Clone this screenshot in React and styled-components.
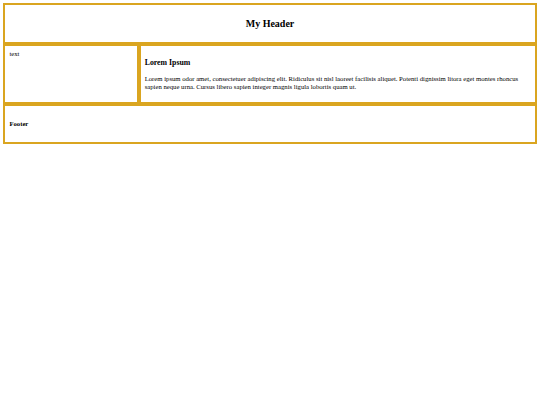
import React from "react";
import styled, { createGlobalStyle } from "styled-components";

const GlobalStyle = createGlobalStyle`
  body {
    margin: 3.4px;
    font-family: "Liberation Serif", "Times New Roman", serif;
    font-size: 6.7px;
    color: #000;
    background: #fff;
  }
`;

const Layout = styled.div`
  display: grid;
  grid-template-columns: 1fr 3fr;
  gap: 4px;
  background-color: #daa520;
  border: 2px solid #daa520;
`;

const Cell = styled.div`
  background-color: #fff;
  padding: 4px;
  grid-column: ${(p) => (p.$wide ? "1 / -1" : "auto")};
  text-align: ${(p) => (p.$center ? "center" : "left")};
`;

const Title = styled.h2`
  font-size: 10px;
  margin: 8.8px 0;
`;

const SubTitle = styled.h3`
  font-size: 7.8px;
  margin: 8px 0;
`;

const Text = styled.p`
  margin: 6.8px 0;
  line-height: 8px;
`;

const FooterTitle = styled.h4`
  font-size: 6.7px;
  margin: 10.4px 0;
`;

const App = () => {
  return (
    <>
      <GlobalStyle />
      <Layout>
        <Cell $wide $center>
          <Title>My Header</Title>
        </Cell>
        <Cell>text</Cell>
        <Cell>
          <SubTitle>Lorem Ipsum</SubTitle>
          <Text>
            Lorem ipsum odor amet, consectetuer adipiscing elit. Ridiculus sit
            nisl laoreet facilisis aliquet. Potenti dignissim litora eget montes
            rhoncus sapien neque urna. Cursus libero sapien integer magnis ligula
            lobortis quam ut.
          </Text>
        </Cell>
        <Cell $wide>
          <FooterTitle>Footer</FooterTitle>
        </Cell>
      </Layout>
    </>
  );
};

export default App;
